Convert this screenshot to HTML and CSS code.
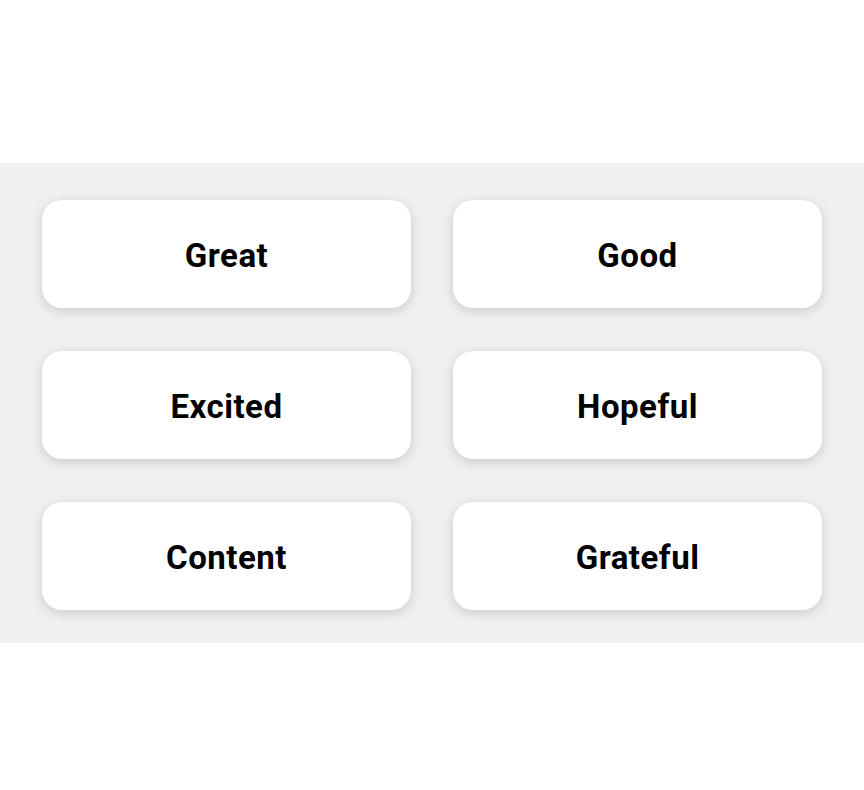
FILE: index.html
```html
<!DOCTYPE html>
<html>
<head>
<meta charset="utf-8">
<link rel="stylesheet" href="styles.css">
</head>
<body>
<div class="top"></div>
<div class="panel">
  <div class="grid">
    <button class="card">Great</button>
    <button class="card">Good</button>
    <button class="card">Excited</button>
    <button class="card">Hopeful</button>
    <button class="card">Content</button>
    <button class="card">Grateful</button>
  </div>
</div>
</body>
</html>
```
FILE: styles.css
```css
html, body { margin: 0; padding: 0; background: #ffffff; }
body { font-family: Roboto, "Liberation Sans", sans-serif; }
.top { height: 163px; }
.panel {
  background: #f0f0f0;
  padding: 37px 42px 34px 42px;
  height: 480px;
  box-sizing: border-box;
}
.grid {
  display: grid;
  grid-template-columns: 369px 369px;
  column-gap: 42px;
  row-gap: 43px;
}
.card {
  height: 108px;
  background: #ffffff;
  border: none;
  border-radius: 20px;
  box-shadow: 0 3px 12px rgba(0,0,0,0.16);
  font-family: Roboto, "Liberation Sans", sans-serif;
  font-weight: 700;
  font-size: 33px;
  letter-spacing: 0.5px;
  color: #000;
  padding: 0;
  padding-top: 2px;
}
```
